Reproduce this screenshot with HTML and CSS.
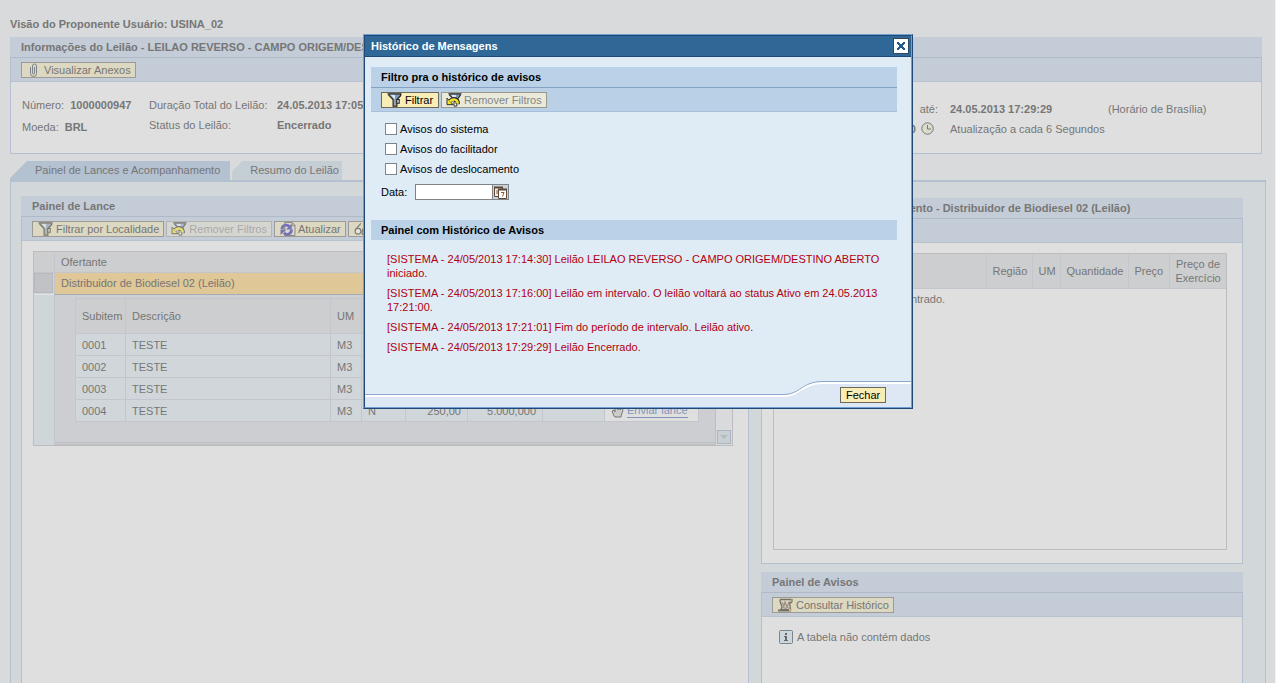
FILE: index.html
```html
<!DOCTYPE html>
<html lang="pt-BR">
<head>
<meta charset="utf-8">
<meta name="viewport" content="width=device-width, initial-scale=1">
<title>Visão do Proponente</title>
<link rel="stylesheet" href="styles.css">
</head>
<body>
<svg class="sprite" aria-hidden="true">
  <symbol id="filter" viewBox="0 0 16 15">
    <path d="M1 1h13v2L9 7v6H7V7L1 2z" fill="#7f98bc"/>
    <path d="M3 2h5v5z" fill="#dfe8f5"/>
    <path d="M0 1h15M1 2l5 5v7h4V7l4-4V1" fill="none" stroke="#222" stroke-width="1.300"/>
    <path d="M10 7h2.500v4H10z" fill="#fff" stroke="#222" stroke-width="1.200"/>
  </symbol>
  <symbol id="unfilter" viewBox="0 0 16 15">
    <path d="M3 1h12l-4 5H7z" fill="#7f98bc"/><path d="M5 2h5v3H7z" fill="#dfe8f5"/>
    <path d="M2 1h14M3 2l3 3M12 6l3-4" fill="none" stroke="#222" stroke-width="1.300"/>
    <path d="M8 9h3v5H8z" fill="#fff" stroke="#222"/>
    <path d="M12 12C12.500 6 7 5 4 8.500" fill="none" stroke="#222" stroke-width="4.400"/>
    <path d="M.5 5.500v7H7z" fill="#f7e52b" stroke="#222"/>
    <path d="M12 11.500C12 6.500 7 5.500 3.500 9" fill="none" stroke="#f7e52b" stroke-width="2.600"/>
  </symbol>
  <symbol id="refresh" viewBox="0 0 16 15">
    <path d="M4.500.500h8l3 3v11h-11z" fill="#d3d8e2" stroke="#444"/>
    <path d="M12.500 1v3h3" fill="none" stroke="#444"/>
    <path d="M1.500 7.500a4.500 4.500 0 0 1 8-2.500M11.500 8a4.500 4.500 0 0 1-8 3.500" fill="none" stroke="#2420a8" stroke-width="3"/>
    <path d="M12 2v6H6zM0 14V8h6z" fill="#2420a8"/>
  </symbol>
  <symbol id="clip" viewBox="0 0 10 14">
    <path d="M1.500 4v6.500a3 3 0 0 0 6 0V3a2 2 0 0 0-4 0v7a1 1 0 0 0 2 0V4" fill="none" stroke="#33415f"/>
  </symbol>
  <symbol id="scroll" viewBox="0 0 16 14">
    <path d="M2.500 1.500h11v3h-2l1 7H3l1-3-2-5z" fill="#dcd3cb" stroke="#222" stroke-width="1.300"/>
    <path d="M4 4l2 4 1-4 2 5 2-5M4.500 9l3 1 3-1" fill="none" stroke="#6d5344" stroke-width="1.200"/>
    <path d="M0 12.500h13" stroke="#222" stroke-width="2"/>
    <path d="M13 1h2v3h-2z" fill="#5d7a26"/><path d="M11 11h3v2h-3z" fill="#e4983e"/>
  </symbol>
  <symbol id="clock" viewBox="0 0 13 13">
    <circle cx="6.500" cy="6.500" r="5.700" fill="#d9dccb" stroke="#777"/>
    <path d="M6.500 3v4H10" fill="none" stroke="#777"/>
  </symbol>
  <symbol id="hand" viewBox="0 0 13 14">
    <path d="M3 12L1 7l2-1 1 2V4l2-1 1 3V2l2 1v3l2-2 1 2-2 6v1H4z" fill="#ccc" stroke="#777"/>
  </symbol>
  <symbol id="info" viewBox="0 0 14 14">
    <rect x=".5" y=".5" width="13" height="13" rx="1" fill="#cbd7dc" stroke="#7c858b"/>
    <path d="M6 3h2v2H6zM5 6h3v4h1v1H5v-1h1V7H5z" fill="#666"/>
  </symbol>
  <symbol id="calendar" viewBox="0 0 13 13">
    <path d="M.5 1.500h8v9h-8z" fill="#f3efe8" stroke="#5c4636"/><path d="M0 1.500h9" stroke="#5c4636" stroke-width="2"/>
    <path d="M2 5h2M2 7h2" stroke="#8b5a3c"/>
    <path d="M4.500 3.500h8v9h-8z" fill="#fff" stroke="#5c4636"/><path d="M4 3.500h9" stroke="#5c4636" stroke-width="2"/><path d="M7 6.500h3L8.500 10.500" fill="none" stroke="#8b5a3c"/>
  </symbol>
  <symbol id="glasses" viewBox="0 0 14 12">
    <path d="M1 7l5-6M7 7l5-5" fill="none" stroke="#333"/>
    <circle cx="3.500" cy="8" r="2.500" fill="#eee" stroke="#333"/><circle cx="9.500" cy="9" r="2.500" fill="#eee" stroke="#333"/>
  </symbol>
</svg>

<div class="page">
  <h1 class="page-title">Visão do Proponente Usuário: USINA_02</h1>

  <section class="panel info-panel">
    <h2 class="panel-head">Informações do Leilão - LEILAO REVERSO - CAMPO ORIGEM/DESTINO</h2>
    <div class="toolbar"><button class="btn muted"><svg class="icon clip"><use href="#clip"/></svg>Visualizar Anexos</button></div>
    <div class="info-body">
      <dl class="pairs ids">
        <div><dt>Número:</dt><dd>1000000947</dd></div>
        <div><dt>Moeda:</dt><dd>BRL</dd></div>
      </dl>
      <dl class="facts">
        <dt>Duração Total do Leilão:</dt><dd>24.05.2013 17:05:00</dd>
        <dt>Status do Leilão:</dt><dd>Encerrado</dd>
      </dl>
      <div class="timing">
        <span class="until">até:</span><b>24.05.2013 17:29:29</b><span>(Horário de Brasília)</span>
        <span class="until"><b>00:00:00</b><svg class="clock"><use href="#clock"/></svg></span><span class="every">Atualização a cada 6 Segundos</span>
      </div>
    </div>
  </section>

  <nav class="tabs">
    <a class="tab active" href="#lances">Painel de Lances e Acompanhamento</a>
    <a class="tab" href="#resumo">Resumo do Leilão</a>
  </nav>

  <main class="workspace" id="lances">
    <section class="panel bids">
      <h2 class="panel-head">Painel de Lance</h2>
      <div class="toolbar">
        <button class="btn muted"><svg class="icon"><use href="#filter"/></svg>Filtrar por Localidade</button>
        <button class="btn muted off" disabled><svg class="icon"><use href="#unfilter"/></svg>Remover Filtros</button>
        <button class="btn muted"><svg class="icon"><use href="#refresh"/></svg>Atualizar</button>
        <button class="btn muted" aria-label="Consultar"><svg class="icon"><use href="#glasses"/></svg></button>
      </div>
      <div class="bid-grid">
        <div class="bidders">
          <div class="corner"></div><div class="bidder-head">Ofertante</div>
          <div class="selector"><i></i></div><div class="bidder">Distribuidor de Biodiesel 02 (Leilão)</div>
          <div class="gutter"></div>
          <div class="nested">
            <table class="items">
              <colgroup><col class="c-sub"><col class="c-desc"><col class="c-um"><col class="c-flag"><col class="c-price"><col class="c-qty"><col class="c-blank"><col></colgroup>
              <thead><tr><th>Subitem</th><th>Descrição</th><th>UM</th><th></th><th></th><th></th><th></th><th></th></tr></thead>
              <tbody>
                <tr><td>0001</td><td>TESTE</td><td>M3</td><td></td><td></td><td></td><td></td><td class="act"></td></tr>
                <tr><td>0002</td><td>TESTE</td><td>M3</td><td></td><td></td><td></td><td></td><td class="act"></td></tr>
                <tr><td>0003</td><td>TESTE</td><td>M3</td><td></td><td></td><td></td><td></td><td class="act"></td></tr>
                <tr><td>0004</td><td>TESTE</td><td>M3</td><td>N</td><td class="num">250,00</td><td class="num">5.000,000</td><td></td><td class="act"><a class="send" href="#enviar"><svg class="hand"><use href="#hand"/></svg><span>Enviar lance</span></a></td></tr>
              </tbody>
            </table>
          </div>
        </div>
        <div class="scroller"><button class="scroll-down" aria-label="Rolar para baixo"></button></div>
      </div>
    </section>

    <div class="side">
      <section class="panel tracking">
        <h2 class="panel-head">Painel de Acompanhamento - Distribuidor de Biodiesel 02 (Leilão)</h2>
        <div class="toolbar"></div>
        <div class="track-body">
          <table class="track">
            <thead><tr><th class="t-wide"></th><th class="t-reg">Região</th><th class="t-um">UM</th><th class="t-qty">Quantidade</th><th class="t-price">Preço</th><th class="t-ex">Preço de Exercício</th></tr></thead>
            <tbody><tr><td colspan="6">Nenhum registro foi encontrado.</td></tr></tbody>
          </table>
        </div>
      </section>
      <section class="panel notices">
        <h2 class="panel-head">Painel de Avisos</h2>
        <div class="toolbar"><button class="btn muted"><svg class="icon"><use href="#scroll"/></svg>Consultar Histórico</button></div>
        <p class="empty"><svg class="info-icon"><use href="#info"/></svg>A tabela não contém dados</p>
      </section>
    </div>
  </main>
</div>

<dialog class="modal" open aria-labelledby="modal-title">
  <div class="modal-frame">
    <header class="modal-bar">
      <h2 id="modal-title">Histórico de Mensagens</h2>
      <button class="close" aria-label="Fechar janela"><svg viewBox="0 0 8 8"><path d="M0 0h2v1h1v1h2V1h1V0h2v2H7v1H6v2h1v1h1v2H6V7H5V6H3v1H2v1H0V6h1V5h1V3H1V2H0z" fill="#235a8c"/></svg></button>
    </header>
    <div class="modal-body">
      <h3 class="band">Filtro pra o histórico de avisos</h3>
      <div class="band-tools">
        <button class="btn"><svg class="icon"><use href="#filter"/></svg>Filtrar</button>
        <button class="btn off" disabled><svg class="icon"><use href="#unfilter"/></svg>Remover Filtros</button>
      </div>
      <div class="checks">
        <label><input type="checkbox">Avisos do sistema</label>
        <label><input type="checkbox">Avisos do facilitador</label>
        <label><input type="checkbox">Avisos de deslocamento</label>
      </div>
      <div class="date-row">
        <label for="date">Data:</label>
        <input id="date" type="text"><button class="pick" aria-label="Escolher data"><svg><use href="#calendar"/></svg></button>
      </div>
      <h3 class="band">Painel com Histórico de Avisos</h3>
      <div class="log">
        <p>[SISTEMA - 24/05/2013 17:14:30] Leilão LEILAO REVERSO - CAMPO ORIGEM/DESTINO ABERTO iniciado.</p>
        <p>[SISTEMA - 24/05/2013 17:16:00] Leilão em intervalo. O leilão voltará ao status Ativo em 24.05.2013 17:21:00.</p>
        <p>[SISTEMA - 24/05/2013 17:21:01] Fim do período de intervalo. Leilão ativo.</p>
        <p>[SISTEMA - 24/05/2013 17:29:29] Leilão Encerrado.</p>
      </div>
    </div>
    <footer class="modal-foot">
      <div class="foot-line"></div>
      <svg class="foot-curve" viewBox="0 0 40 27"><path d="M0 14.500C18 14.500 18 1.500 40 1.500V27H0z" fill="#dde8f4"/><path d="M0 16C18 16 18 3 40 3" fill="none" stroke="#fff" stroke-width="2"/><path d="M0 14.500C18 14.500 18 1.500 40 1.500" fill="none" stroke="#8ea8cb"/></svg>
      <div class="foot-actions"><button class="btn">Fechar</button></div>
    </footer>
  </div>
</dialog>
</body>
</html>
```
FILE: styles.css
```css
* { box-sizing: border-box; }

body {
  margin: 0;
  height: 100vh;
  overflow: hidden;
  background: #d8dadb;
  border-right: 1px solid #f2f2f2;
  color: #767676;
  font: 11px/14px "Liberation Sans", Arial, sans-serif;
}

h1, h2, h3, p, dl, dd { margin: 0; font-size: 11px; }
button, input { font: inherit; color: inherit; padding: 0; margin: 0; }
.sprite { position: absolute; width: 0; height: 0; }

.page {
  height: 100%;
  display: flex;
  flex-direction: column;
  padding: 17px 9px 0 10px;
}
.page-title { margin-bottom: 6px; }

.panel { background: #dfdfdf; border: 1px solid #b4c0cf; }
.panel-head {
  height: 20px;
  margin: -1px -1px 0;
  padding-left: 11px;
  line-height: 20px;
  background: #c4ccd7;
  white-space: nowrap;
  overflow: hidden;
}
.toolbar {
  display: flex;
  align-items: center;
  gap: 2px;
  height: 25px;
  padding-left: 10px;
  background: #c4ccd7;
  border-top: 1px solid #aebac8;
  border-bottom: 1px solid #b8c2cf;
}

.btn {
  display: inline-flex;
  align-items: center;
  height: 16px;
  padding: 0 5px;
  background: #f9edb6;
  border: 1px solid #6b6a5d;
  color: #000;
  white-space: nowrap;
}
.btn.off { padding: 0 4px; background: #eaeadb; border-color: #99988c; color: #868686; }
.btn.muted { padding: 0 4px 0 5px; background: #dcd8c1; border-color: #9c9b98; color: #767676; }
.btn.muted.off { padding: 0 4px; background: #d6d6d1; border-color: #b2b3b2; color: #a9a9a9; }
.icon { width: 16px; height: 14px; margin-right: 2px; }
.icon.clip { width: 10px; margin: 0 5px 0 2px; }
.muted .icon { opacity: .55; }

/* auction summary */
.info-panel { margin-right: 4px; }
.info-body { display: flex; align-items: flex-start; height: 71px; padding: 16px 57px 0 11px; }
.pairs { display: grid; gap: 8px; width: 127px; }
.pairs div { display: flex; gap: 6px; }
dd { font-weight: bold; white-space: nowrap; }
.facts { display: grid; grid-template-columns: 128px auto; row-gap: 6px; }
.timing {
  display: grid;
  grid-template-columns: 70px 158px 96px;
  row-gap: 6px;
  margin: 4px 0 0 auto;
  white-space: nowrap;
}
.until { display: flex; justify-content: flex-end; gap: 5px; padding-right: 12px; }
.clock { flex: none; width: 13px; height: 13px; margin-right: 4px; }
.every { grid-column: span 2; }

/* tabs */
.tabs { display: flex; gap: 2px; margin-top: 7px; }
.tab {
  height: 19px;
  padding: 0 3px 0 18px;
  line-height: 19px;
  color: #767676;
  text-decoration: none;
  background: #c5cdd5;
  clip-path: polygon(10px 0, 100% 0, 100% 100%, 0 100%, 0 10px);
}
.tab.active {
  padding: 0 10px 0 25px;
  background: #b3c1d1;
  clip-path: polygon(17px 0, 100% 0, 100% 100%, 0 100%, 0 17px);
}

.workspace {
  flex: 1;
  min-height: 0;
  display: grid;
  grid-template-columns: 728fr 482fr;
  gap: 12px;
  padding: 14px 22px 0 10px;
  background: #d2d7da;
  border: 1px solid #b4c0cf;
  border-top-width: 2px;
  border-bottom: 0;
}
.bids { border-bottom: 0; }
.bid-grid { display: flex; margin: 10px 15px 0 11px; border: 1px solid #bdbdbf; }
.bidders { flex: 1; display: grid; grid-template-columns: 20px 1fr; }
.corner, .bidder-head { height: 21px; background: #cdcecf; border-bottom: 1px solid #c3c5ca; }
.bidder-head, .bidder { padding-left: 6px; line-height: 20px; border-left: 1px solid #c3c5ca; }
.selector, .gutter { background: #cfd6da; }
.selector { border-bottom: 1px solid #e3e3e3; padding-right: 1px; }
.selector i { display: block; height: 20px; background: #c1c2c6; border: 1px solid #b7b8bd; }
.bidder { height: 22px; background: #dfc797; border-bottom: 1px solid #a5adb6; }
.nested { padding: 3px 16px 20px 20px; background: #cdced1; border-left: 1px solid #c3c5ca; border-bottom: 3px double #bdbec3; }
.scroller {
  width: 17px;
  display: flex;
  align-items: flex-end;
  background: #d8dadb;
  border-left: 1px solid #bdbdbf;
}
.scroll-down { width: 14px; height: 14px; margin: 0 1px 1px; background: #c8cfd5; border: 1px solid #aab6c2; }
.scroll-down::after { content: ""; display: block; border: 4px solid transparent; border-top-color: #b9b9b9; border-bottom: 0; margin: 0 2px; }

table { border-collapse: collapse; table-layout: fixed; width: 100%; }
.items { border: 1px solid #bdbdbf; }
.items th, .items td { height: 22px; padding: 0 6px; text-align: left; font-weight: normal; border: 1px solid #c3c7cd; }
.items th { height: 35px; background: #cdcecf; }
.items td { background: #d0d6da; }
.items .act { background: #dfdfdf; }
.items .num { text-align: right; }
.c-sub { width: 50px; } .c-desc { width: 205px; } .c-um { width: 31px; } .c-flag { width: 44px; }
.c-price { width: 62px; } .c-qty { width: 75px; } .c-blank { width: 62px; }
.send { display: flex; gap: 3px; color: #8394b8; text-decoration: none; }
.send span { border-bottom: 1px solid #8394b8; line-height: 13px; white-space: nowrap; }
.hand { width: 13px; height: 14px; }

.side { display: flex; flex-direction: column; gap: 8px; padding-top: 2px; min-width: 0; min-height: 0; }
.tracking .panel-head { padding-left: 25px; }
.track-body { height: 297px; margin: 10px 15px 13px 11px; border: 1px solid #bdbdbf; }
.track th { height: 34px; padding: 0 6px; background: #cdcecf; font-weight: normal; text-align: right; border-left: 1px solid #c3c7cd; border-bottom: 1px solid #c3c7cd; }
.track th:first-child { border-left: 0; }
.track td { padding: 3px 14px; }
.t-reg { width: 46px; } .t-um { width: 28px; } .t-qty { width: 68px; } .t-price { width: 41px; } .t-ex { width: 57px; }
.notices { flex: 1; border-bottom: 0; }
.empty { display: flex; align-items: center; gap: 4px; padding: 13px 17px; }
.info-icon { width: 14px; height: 14px; }

/* message history window */
.modal {
  position: fixed;
  inset: 34px 0 auto;
  width: 550px;
  margin: 0 auto;
  padding: 0;
  border: 1px solid;
  border-color: #6f9fd3 #1f4877 #1f4877 #6f9fd3;
  background: #dfecf6;
  color: #000;
}
.modal-frame { border: 1px solid; border-color: #1f4877 #6f9fd3 #6f9fd3 #1f4877; }
.modal-bar {
  display: flex;
  align-items: center;
  justify-content: space-between;
  height: 21px;
  padding: 0 2px 0 6px;
  background: #2f6796;
  border-bottom: 1px solid #1f4877;
  color: #fff;
}
.close { display: grid; place-items: center; width: 16px; height: 16px; background: #fff; border: 1px solid #31475f; }
.close svg { width: 8px; height: 8px; }
.modal-body { padding: 10px 14px 0 6px; }
.band { height: 20px; padding-left: 10px; line-height: 20px; background: #bad1e8; }
.band-tools {
  display: flex;
  align-items: center;
  gap: 2px;
  height: 25px;
  padding-left: 10px;
  background: #bad0e7;
  border-top: 1px solid #84a3c4;
  border-bottom: 1px solid #a6c0da;
}
.checks { padding: 7px 14px 0; }
.checks label { display: flex; align-items: center; gap: 3px; height: 20px; }
.checks input { appearance: none; width: 12px; height: 12px; background: #fff; border: 1px solid #7f8488; }
.date-row { display: flex; align-items: center; height: 16px; margin: 5px 0 20px; padding-left: 10px; }
.date-row label { width: 34px; }
.date-row input { width: 78px; height: 16px; background: #fff; border: 1px solid #7f8488; }
.pick { display: grid; place-items: center; width: 17px; height: 16px; margin-left: -1px; background: #c9d3de; border: 1px solid #7f8488; }
.pick svg { width: 13px; height: 13px; }
.log { display: grid; gap: 6px; padding: 12px 16px 26px; color: #b0000f; }
.modal-foot { display: flex; height: 27px; }
.foot-line { flex: 1; margin-top: 14px; background: #dde8f4; border-top: 1px solid #8ea8cb; box-shadow: inset 0 2px #fff; }
.foot-curve { width: 40px; height: 27px; }
.foot-actions { width: 88px; margin-top: 1px; padding: 5px 24px 0 17px; background: #dde8f4; border-top: 1px solid #8ea8cb; box-shadow: inset 0 2px #fff; }
```
